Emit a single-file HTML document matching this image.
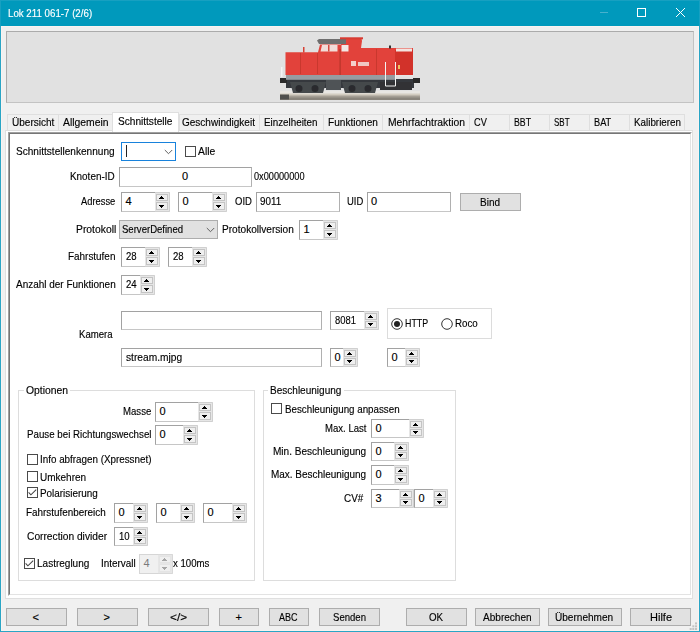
<!DOCTYPE html>
<html><head><meta charset="utf-8"><style>html,body{margin:0;padding:0;width:700px;height:632px;overflow:hidden;background:#f0f0f0;position:relative;font-family:"Liberation Sans",sans-serif;}
.t{position:absolute;white-space:nowrap;line-height:13px;color:#000;transform-origin:0 0;-webkit-text-stroke:0.15px currentColor;}
</style></head><body>
<div style="position:absolute;left:0px;top:0px;width:700px;height:26px;background:#0099bc"></div>
<div style="position:absolute;left:0px;top:26px;width:1px;height:606px;background:#2aa5c5"></div>
<div style="position:absolute;left:0px;top:0px;width:700px;height:1px;background:#17a0c1"></div>
<div style="position:absolute;left:0px;top:0px;width:1px;height:26px;background:#17a0c1"></div>
<div style="position:absolute;left:699px;top:0px;width:1px;height:26px;background:#17a0c1"></div>
<div style="position:absolute;left:699px;top:26px;width:1px;height:606px;background:#2aa5c5"></div>
<div style="position:absolute;left:0px;top:631px;width:700px;height:1px;background:#2aa5c5"></div>
<div style="position:absolute;left:600px;top:12px;width:8px;height:1px;background:#48b1cd"></div>
<div style="position:absolute;left:637px;top:8px;width:9px;height:9px;box-sizing:border-box;border:1px solid #fff"></div>
<svg style="position:absolute;left:676px;top:8px" width="9" height="9" viewBox="0 0 9 9"><path d="M0 0L9 9M9 0L0 9" stroke="#fff" stroke-width="1"/></svg>
<div style="position:absolute;left:6px;top:31px;width:688px;height:72px;box-sizing:border-box;background:#e1e1e1;border:1px solid;border-color:#ababab #c3c3c3 #c3c3c3 #ababab"></div>
<svg style="position:absolute;left:276px;top:34px" width="150" height="70" viewBox="276 34 150 70">
<defs><filter id="bl" x="-5%" y="-5%" width="110%" height="110%"><feGaussianBlur stdDeviation="0.4"/></filter></defs>
<g filter="url(#bl)">
<rect x="280" y="91" width="140" height="3" fill="#e8e6e2"/>
<rect x="280" y="94" width="140" height="6" fill="#a49e94"/>
<rect x="280" y="93.5" width="140" height="2" fill="#d2ccc0"/>
<rect x="280" y="97.5" width="140" height="2.5" fill="#8a857c"/>
<rect x="280" y="94.5" width="9" height="5" fill="#50504e"/>
<rect x="286" y="79" width="128" height="9" fill="#36393c"/>
<path d="M290 82H326L323 93H293Z" fill="#45484c"/>
<path d="M342 82H378L375 93H345Z" fill="#45484c"/>
<rect x="380" y="82" width="32" height="8" fill="#303234"/>
<rect x="326" y="80" width="15" height="10" fill="#505356"/>
<circle cx="299" cy="88.5" r="3.5" fill="#2a2c2e"/><circle cx="315" cy="88.5" r="3.5" fill="#2a2c2e"/>
<circle cx="352" cy="88.5" r="3.5" fill="#2a2c2e"/><circle cx="368" cy="88.5" r="3.5" fill="#2a2c2e"/>
<rect x="280" y="78" width="7" height="5" fill="#2a2a2a"/>
<rect x="413" y="78" width="7" height="5" fill="#2a2a2a"/>
<rect x="281" y="67" width="1.5" height="10" fill="#f4f4f4"/>
<rect x="286" y="74.8" width="110" height="5" fill="#979ca1"/>
<rect x="395" y="74.8" width="19" height="1.5" fill="#e6e6e6"/>
<path d="M285.5 52.3H318L320 44.5H341V38.5H361.5L362 41L361 48H413V74.9H285.5Z" fill="#e2433a"/>
<path d="M317 40.5L319 39H346V44H319Z" fill="#6e6e6e"/>
<rect x="340" y="37.3" width="23" height="2" fill="#d83a30"/>
<path d="M320.5 51.5L322 45H337.5V51.5Z" fill="#f2dcd8"/>
<rect x="328" y="45" width="1.5" height="6.5" fill="#d44a40"/>
<path d="M341.5 51.5V45H348.5V51.5Z" fill="#f3e8e6"/>
<rect x="395" y="50" width="18" height="25" fill="#d2322a"/>
<rect x="396" y="48.5" width="16" height="3" fill="#f3e4e0"/>
<rect x="300" y="53" width="1" height="21" fill="#c9382e"/>
<rect x="317" y="53" width="1" height="21" fill="#c9382e"/>
<rect x="339.5" y="49" width="1.2" height="26" fill="#b8352c"/>
<rect x="376" y="49" width="1" height="26" fill="#c9382e"/>
<rect x="351" y="61" width="5" height="5" fill="#f4d0cc"/>
<rect x="358" y="62" width="11" height="4" fill="#f0c8c4"/>
<rect x="303" y="47" width="1.5" height="5.5" fill="#d84034"/>
<rect x="389" y="45.5" width="2" height="3" fill="#333"/>
<rect x="398" y="65" width="2" height="4" fill="#f0c060"/>
<path d="M385.5 62V86H395.5V62" fill="none" stroke="#f2f2f2" stroke-width="1"/>
</g>
</svg>

<div style="position:absolute;left:7px;top:114px;width:52px;height:17px;box-sizing:border-box;background:#f0f0f0;border:1px solid #dfdfdf;border-bottom:none"></div>
<div style="position:absolute;left:58px;top:114px;width:55px;height:17px;box-sizing:border-box;background:#f0f0f0;border:1px solid #dfdfdf;border-bottom:none"></div>
<div style="position:absolute;left:179px;top:114px;width:81px;height:17px;box-sizing:border-box;background:#f0f0f0;border:1px solid #dfdfdf;border-bottom:none"></div>
<div style="position:absolute;left:259px;top:114px;width:65px;height:17px;box-sizing:border-box;background:#f0f0f0;border:1px solid #dfdfdf;border-bottom:none"></div>
<div style="position:absolute;left:323px;top:114px;width:60px;height:17px;box-sizing:border-box;background:#f0f0f0;border:1px solid #dfdfdf;border-bottom:none"></div>
<div style="position:absolute;left:382px;top:114px;width:88px;height:17px;box-sizing:border-box;background:#f0f0f0;border:1px solid #dfdfdf;border-bottom:none"></div>
<div style="position:absolute;left:469px;top:114px;width:41px;height:17px;box-sizing:border-box;background:#f0f0f0;border:1px solid #dfdfdf;border-bottom:none"></div>
<div style="position:absolute;left:509px;top:114px;width:41px;height:17px;box-sizing:border-box;background:#f0f0f0;border:1px solid #dfdfdf;border-bottom:none"></div>
<div style="position:absolute;left:549px;top:114px;width:41px;height:17px;box-sizing:border-box;background:#f0f0f0;border:1px solid #dfdfdf;border-bottom:none"></div>
<div style="position:absolute;left:589px;top:114px;width:41px;height:17px;box-sizing:border-box;background:#f0f0f0;border:1px solid #dfdfdf;border-bottom:none"></div>
<div style="position:absolute;left:629px;top:114px;width:56px;height:17px;box-sizing:border-box;background:#f0f0f0;border:1px solid #dfdfdf;border-bottom:none"></div>
<div style="position:absolute;left:5px;top:130px;width:688px;height:469px;box-sizing:border-box;background:#fff;border:1px solid #dfdfdf"></div>
<div style="position:absolute;left:112px;top:112px;width:67px;height:20px;box-sizing:border-box;background:#fff;border:1px solid #dfdfdf;border-bottom:none"></div>
<div style="position:absolute;left:8px;top:132px;width:684px;height:464px;box-sizing:border-box;border:1px solid;border-color:#a0a0a0 #fff #fff #a0a0a0"></div>
<div style="position:absolute;left:9px;top:133px;width:682px;height:462px;box-sizing:border-box;background:#fff;border:1px solid;border-color:#767676 #e3e3e3 #e3e3e3 #767676"></div>
<div style="position:absolute;left:121px;top:142px;width:55px;height:19px;box-sizing:border-box;background:#fff;border:1px solid #1882dc"></div>
<div style="position:absolute;left:126px;top:145px;width:1px;height:12px;background:#222"></div>
<svg style="position:absolute;left:164px;top:149px" width="9" height="6" viewBox="0 0 9 6"><path d="M0.8 1L4.5 4.7L8.2 1" fill="none" stroke="#606060" stroke-width="1"/></svg>
<svg style="position:absolute;left:185px;top:146px" width="11" height="11" viewBox="0 0 11 11"><rect x="0.5" y="0.5" width="10" height="10" fill="#fff" stroke="#4a4a4a"/></svg>
<div style="position:absolute;left:119px;top:167px;width:133px;height:20px;box-sizing:border-box;background:#fff;border:1px solid;border-color:#a2a2a2 #b0b0b0 #c6c6c6 #a2a2a2"></div>
<div style="position:absolute;left:121px;top:192px;width:49px;height:20px;box-sizing:border-box;background:#fff;border:1px solid;border-color:#a2a2a2 #b0b0b0 #c6c6c6 #a2a2a2"></div>
<svg style="position:absolute;left:155px;top:192px" width="15" height="20" viewBox="0 0 15 20"><rect x="0" y="0" width="15" height="20" fill="#e6e6e6"/><path d="M0 0.5H14.5V19.5H0" fill="none" stroke="#d0d0d0"/><rect x="1.5" y="2.5" width="11" height="6" fill="#efefef" stroke="#c4c4c4"/><rect x="1.5" y="10.5" width="11" height="7" fill="#efefef" stroke="#c4c4c4"/><path d="M6 4h1v1h1v1h1v1h-5v-1h1v-1h1z" fill="#000"/><path d="M4 13h5v1h-1v1h-1v1h-1v-1h-1v-1h-1z" fill="#000"/></svg>
<div style="position:absolute;left:178px;top:192px;width:49px;height:20px;box-sizing:border-box;background:#fff;border:1px solid;border-color:#a2a2a2 #b0b0b0 #c6c6c6 #a2a2a2"></div>
<svg style="position:absolute;left:212px;top:192px" width="15" height="20" viewBox="0 0 15 20"><rect x="0" y="0" width="15" height="20" fill="#e6e6e6"/><path d="M0 0.5H14.5V19.5H0" fill="none" stroke="#d0d0d0"/><rect x="1.5" y="2.5" width="11" height="6" fill="#efefef" stroke="#c4c4c4"/><rect x="1.5" y="10.5" width="11" height="7" fill="#efefef" stroke="#c4c4c4"/><path d="M6 4h1v1h1v1h1v1h-5v-1h1v-1h1z" fill="#000"/><path d="M4 13h5v1h-1v1h-1v1h-1v-1h-1v-1h-1z" fill="#000"/></svg>
<div style="position:absolute;left:256px;top:192px;width:84px;height:20px;box-sizing:border-box;background:#fff;border:1px solid;border-color:#a2a2a2 #b0b0b0 #c6c6c6 #a2a2a2"></div>
<div style="position:absolute;left:367px;top:192px;width:84px;height:20px;box-sizing:border-box;background:#fff;border:1px solid;border-color:#a2a2a2 #b0b0b0 #c6c6c6 #a2a2a2"></div>
<div style="position:absolute;left:460px;top:193px;width:61px;height:18px;box-sizing:border-box;background:#e1e1e1;border:1px solid #adadad"></div>
<div style="position:absolute;left:119px;top:220px;width:99px;height:19px;box-sizing:border-box;background:#e1e1e1;border:1px solid #adadad"></div>
<svg style="position:absolute;left:206px;top:227px" width="9" height="6" viewBox="0 0 9 6"><path d="M0.8 1L4.5 4.7L8.2 1" fill="none" stroke="#606060" stroke-width="1"/></svg>
<div style="position:absolute;left:299px;top:220px;width:39px;height:20px;box-sizing:border-box;background:#fff;border:1px solid;border-color:#a2a2a2 #b0b0b0 #c6c6c6 #a2a2a2"></div>
<svg style="position:absolute;left:323px;top:220px" width="15" height="20" viewBox="0 0 15 20"><rect x="0" y="0" width="15" height="20" fill="#e6e6e6"/><path d="M0 0.5H14.5V19.5H0" fill="none" stroke="#d0d0d0"/><rect x="1.5" y="2.5" width="11" height="6" fill="#efefef" stroke="#c4c4c4"/><rect x="1.5" y="10.5" width="11" height="7" fill="#efefef" stroke="#c4c4c4"/><path d="M6 4h1v1h1v1h1v1h-5v-1h1v-1h1z" fill="#000"/><path d="M4 13h5v1h-1v1h-1v1h-1v-1h-1v-1h-1z" fill="#000"/></svg>
<div style="position:absolute;left:121px;top:247px;width:39px;height:20px;box-sizing:border-box;background:#fff;border:1px solid;border-color:#a2a2a2 #b0b0b0 #c6c6c6 #a2a2a2"></div>
<svg style="position:absolute;left:145px;top:247px" width="15" height="20" viewBox="0 0 15 20"><rect x="0" y="0" width="15" height="20" fill="#e6e6e6"/><path d="M0 0.5H14.5V19.5H0" fill="none" stroke="#d0d0d0"/><rect x="1.5" y="2.5" width="11" height="6" fill="#efefef" stroke="#c4c4c4"/><rect x="1.5" y="10.5" width="11" height="7" fill="#efefef" stroke="#c4c4c4"/><path d="M6 4h1v1h1v1h1v1h-5v-1h1v-1h1z" fill="#000"/><path d="M4 13h5v1h-1v1h-1v1h-1v-1h-1v-1h-1z" fill="#000"/></svg>
<div style="position:absolute;left:168px;top:247px;width:39px;height:20px;box-sizing:border-box;background:#fff;border:1px solid;border-color:#a2a2a2 #b0b0b0 #c6c6c6 #a2a2a2"></div>
<svg style="position:absolute;left:192px;top:247px" width="15" height="20" viewBox="0 0 15 20"><rect x="0" y="0" width="15" height="20" fill="#e6e6e6"/><path d="M0 0.5H14.5V19.5H0" fill="none" stroke="#d0d0d0"/><rect x="1.5" y="2.5" width="11" height="6" fill="#efefef" stroke="#c4c4c4"/><rect x="1.5" y="10.5" width="11" height="7" fill="#efefef" stroke="#c4c4c4"/><path d="M6 4h1v1h1v1h1v1h-5v-1h1v-1h1z" fill="#000"/><path d="M4 13h5v1h-1v1h-1v1h-1v-1h-1v-1h-1z" fill="#000"/></svg>
<div style="position:absolute;left:121px;top:275px;width:34px;height:20px;box-sizing:border-box;background:#fff;border:1px solid;border-color:#a2a2a2 #b0b0b0 #c6c6c6 #a2a2a2"></div>
<svg style="position:absolute;left:140px;top:275px" width="15" height="20" viewBox="0 0 15 20"><rect x="0" y="0" width="15" height="20" fill="#e6e6e6"/><path d="M0 0.5H14.5V19.5H0" fill="none" stroke="#d0d0d0"/><rect x="1.5" y="2.5" width="11" height="6" fill="#efefef" stroke="#c4c4c4"/><rect x="1.5" y="10.5" width="11" height="7" fill="#efefef" stroke="#c4c4c4"/><path d="M6 4h1v1h1v1h1v1h-5v-1h1v-1h1z" fill="#000"/><path d="M4 13h5v1h-1v1h-1v1h-1v-1h-1v-1h-1z" fill="#000"/></svg>
<div style="position:absolute;left:121px;top:311px;width:201px;height:19px;box-sizing:border-box;background:#fff;border:1px solid;border-color:#a2a2a2 #b0b0b0 #c6c6c6 #a2a2a2"></div>
<div style="position:absolute;left:330px;top:311px;width:49px;height:19px;box-sizing:border-box;background:#fff;border:1px solid;border-color:#a2a2a2 #b0b0b0 #c6c6c6 #a2a2a2"></div>
<svg style="position:absolute;left:364px;top:311px" width="15" height="19" viewBox="0 0 15 19"><rect x="0" y="0" width="15" height="19" fill="#e6e6e6"/><path d="M0 0.5H14.5V18.5H0" fill="none" stroke="#d0d0d0"/><rect x="1.5" y="2.5" width="11" height="6" fill="#efefef" stroke="#c4c4c4"/><rect x="1.5" y="10.5" width="11" height="6" fill="#efefef" stroke="#c4c4c4"/><path d="M6 4h1v1h1v1h1v1h-5v-1h1v-1h1z" fill="#000"/><path d="M4 12h5v1h-1v1h-1v1h-1v-1h-1v-1h-1z" fill="#000"/></svg>
<div style="position:absolute;left:387px;top:308px;width:105px;height:31px;box-sizing:border-box;border:1px solid #dcdcdc"></div>
<svg style="position:absolute;left:391px;top:318px" width="12" height="12" viewBox="0 0 12 12"><circle cx="6" cy="6" r="5.3" fill="#fff" stroke="#333" stroke-width="1"/><circle cx="6" cy="6" r="3" fill="#222"/></svg>
<svg style="position:absolute;left:441px;top:318px" width="12" height="12" viewBox="0 0 12 12"><circle cx="6" cy="6" r="5.3" fill="#fff" stroke="#333" stroke-width="1"/></svg>
<div style="position:absolute;left:121px;top:348px;width:201px;height:19px;box-sizing:border-box;background:#fff;border:1px solid;border-color:#a2a2a2 #b0b0b0 #c6c6c6 #a2a2a2"></div>
<div style="position:absolute;left:330px;top:348px;width:28px;height:19px;box-sizing:border-box;background:#fff;border:1px solid;border-color:#a2a2a2 #b0b0b0 #c6c6c6 #a2a2a2"></div>
<svg style="position:absolute;left:343px;top:348px" width="15" height="19" viewBox="0 0 15 19"><rect x="0" y="0" width="15" height="19" fill="#e6e6e6"/><path d="M0 0.5H14.5V18.5H0" fill="none" stroke="#d0d0d0"/><rect x="1.5" y="2.5" width="11" height="6" fill="#efefef" stroke="#c4c4c4"/><rect x="1.5" y="10.5" width="11" height="6" fill="#efefef" stroke="#c4c4c4"/><path d="M6 4h1v1h1v1h1v1h-5v-1h1v-1h1z" fill="#000"/><path d="M4 12h5v1h-1v1h-1v1h-1v-1h-1v-1h-1z" fill="#000"/></svg>
<div style="position:absolute;left:387px;top:348px;width:33px;height:19px;box-sizing:border-box;background:#fff;border:1px solid;border-color:#a2a2a2 #b0b0b0 #c6c6c6 #a2a2a2"></div>
<svg style="position:absolute;left:405px;top:348px" width="15" height="19" viewBox="0 0 15 19"><rect x="0" y="0" width="15" height="19" fill="#e6e6e6"/><path d="M0 0.5H14.5V18.5H0" fill="none" stroke="#d0d0d0"/><rect x="1.5" y="2.5" width="11" height="6" fill="#efefef" stroke="#c4c4c4"/><rect x="1.5" y="10.5" width="11" height="6" fill="#efefef" stroke="#c4c4c4"/><path d="M6 4h1v1h1v1h1v1h-5v-1h1v-1h1z" fill="#000"/><path d="M4 12h5v1h-1v1h-1v1h-1v-1h-1v-1h-1z" fill="#000"/></svg>
<div style="position:absolute;left:18px;top:390px;width:237px;height:191px;box-sizing:border-box;border:1px solid #dddddd"></div>
<div style="position:absolute;left:24px;top:385px;width:46px;height:12px;background:#fff"></div>
<div style="position:absolute;left:155px;top:402px;width:58px;height:20px;box-sizing:border-box;background:#fff;border:1px solid;border-color:#a2a2a2 #b0b0b0 #c6c6c6 #a2a2a2"></div>
<svg style="position:absolute;left:198px;top:402px" width="15" height="20" viewBox="0 0 15 20"><rect x="0" y="0" width="15" height="20" fill="#e6e6e6"/><path d="M0 0.5H14.5V19.5H0" fill="none" stroke="#d0d0d0"/><rect x="1.5" y="2.5" width="11" height="6" fill="#efefef" stroke="#c4c4c4"/><rect x="1.5" y="10.5" width="11" height="7" fill="#efefef" stroke="#c4c4c4"/><path d="M6 4h1v1h1v1h1v1h-5v-1h1v-1h1z" fill="#000"/><path d="M4 13h5v1h-1v1h-1v1h-1v-1h-1v-1h-1z" fill="#000"/></svg>
<div style="position:absolute;left:155px;top:425px;width:43px;height:20px;box-sizing:border-box;background:#fff;border:1px solid;border-color:#a2a2a2 #b0b0b0 #c6c6c6 #a2a2a2"></div>
<svg style="position:absolute;left:183px;top:425px" width="15" height="20" viewBox="0 0 15 20"><rect x="0" y="0" width="15" height="20" fill="#e6e6e6"/><path d="M0 0.5H14.5V19.5H0" fill="none" stroke="#d0d0d0"/><rect x="1.5" y="2.5" width="11" height="6" fill="#efefef" stroke="#c4c4c4"/><rect x="1.5" y="10.5" width="11" height="7" fill="#efefef" stroke="#c4c4c4"/><path d="M6 4h1v1h1v1h1v1h-5v-1h1v-1h1z" fill="#000"/><path d="M4 13h5v1h-1v1h-1v1h-1v-1h-1v-1h-1z" fill="#000"/></svg>
<svg style="position:absolute;left:27px;top:454px" width="11" height="11" viewBox="0 0 11 11"><rect x="0.5" y="0.5" width="10" height="10" fill="#fff" stroke="#4a4a4a"/></svg>
<svg style="position:absolute;left:27px;top:471px" width="11" height="11" viewBox="0 0 11 11"><rect x="0.5" y="0.5" width="10" height="10" fill="#fff" stroke="#4a4a4a"/></svg>
<svg style="position:absolute;left:27px;top:487px" width="11" height="11" viewBox="0 0 11 11"><rect x="0.5" y="0.5" width="10" height="10" fill="#fff" stroke="#4a4a4a"/><path d="M1.6 5.3L3.9 7.8L9.2 2.6" fill="none" stroke="#444" stroke-width="1.05"/></svg>
<div style="position:absolute;left:114px;top:503px;width:34px;height:20px;box-sizing:border-box;background:#fff;border:1px solid;border-color:#a2a2a2 #b0b0b0 #c6c6c6 #a2a2a2"></div>
<svg style="position:absolute;left:133px;top:503px" width="15" height="20" viewBox="0 0 15 20"><rect x="0" y="0" width="15" height="20" fill="#e6e6e6"/><path d="M0 0.5H14.5V19.5H0" fill="none" stroke="#d0d0d0"/><rect x="1.5" y="2.5" width="11" height="6" fill="#efefef" stroke="#c4c4c4"/><rect x="1.5" y="10.5" width="11" height="7" fill="#efefef" stroke="#c4c4c4"/><path d="M6 4h1v1h1v1h1v1h-5v-1h1v-1h1z" fill="#000"/><path d="M4 13h5v1h-1v1h-1v1h-1v-1h-1v-1h-1z" fill="#000"/></svg>
<div style="position:absolute;left:156px;top:503px;width:39px;height:20px;box-sizing:border-box;background:#fff;border:1px solid;border-color:#a2a2a2 #b0b0b0 #c6c6c6 #a2a2a2"></div>
<svg style="position:absolute;left:180px;top:503px" width="15" height="20" viewBox="0 0 15 20"><rect x="0" y="0" width="15" height="20" fill="#e6e6e6"/><path d="M0 0.5H14.5V19.5H0" fill="none" stroke="#d0d0d0"/><rect x="1.5" y="2.5" width="11" height="6" fill="#efefef" stroke="#c4c4c4"/><rect x="1.5" y="10.5" width="11" height="7" fill="#efefef" stroke="#c4c4c4"/><path d="M6 4h1v1h1v1h1v1h-5v-1h1v-1h1z" fill="#000"/><path d="M4 13h5v1h-1v1h-1v1h-1v-1h-1v-1h-1z" fill="#000"/></svg>
<div style="position:absolute;left:203px;top:503px;width:44px;height:20px;box-sizing:border-box;background:#fff;border:1px solid;border-color:#a2a2a2 #b0b0b0 #c6c6c6 #a2a2a2"></div>
<svg style="position:absolute;left:232px;top:503px" width="15" height="20" viewBox="0 0 15 20"><rect x="0" y="0" width="15" height="20" fill="#e6e6e6"/><path d="M0 0.5H14.5V19.5H0" fill="none" stroke="#d0d0d0"/><rect x="1.5" y="2.5" width="11" height="6" fill="#efefef" stroke="#c4c4c4"/><rect x="1.5" y="10.5" width="11" height="7" fill="#efefef" stroke="#c4c4c4"/><path d="M6 4h1v1h1v1h1v1h-5v-1h1v-1h1z" fill="#000"/><path d="M4 13h5v1h-1v1h-1v1h-1v-1h-1v-1h-1z" fill="#000"/></svg>
<div style="position:absolute;left:114px;top:527px;width:34px;height:19px;box-sizing:border-box;background:#fff;border:1px solid;border-color:#a2a2a2 #b0b0b0 #c6c6c6 #a2a2a2"></div>
<svg style="position:absolute;left:133px;top:527px" width="15" height="19" viewBox="0 0 15 19"><rect x="0" y="0" width="15" height="19" fill="#e6e6e6"/><path d="M0 0.5H14.5V18.5H0" fill="none" stroke="#d0d0d0"/><rect x="1.5" y="2.5" width="11" height="6" fill="#efefef" stroke="#c4c4c4"/><rect x="1.5" y="10.5" width="11" height="6" fill="#efefef" stroke="#c4c4c4"/><path d="M6 4h1v1h1v1h1v1h-5v-1h1v-1h1z" fill="#000"/><path d="M4 12h5v1h-1v1h-1v1h-1v-1h-1v-1h-1z" fill="#000"/></svg>
<svg style="position:absolute;left:24px;top:558px" width="11" height="11" viewBox="0 0 11 11"><rect x="0.5" y="0.5" width="10" height="10" fill="#fff" stroke="#4a4a4a"/><path d="M1.6 5.3L3.9 7.8L9.2 2.6" fill="none" stroke="#444" stroke-width="1.05"/></svg>
<div style="position:absolute;left:139px;top:554px;width:34px;height:20px;box-sizing:border-box;background:#f0f0f0;border:1px solid;border-color:#d6d6d6"></div>
<svg style="position:absolute;left:158px;top:554px" width="15" height="20" viewBox="0 0 15 20"><rect x="0" y="0" width="15" height="20" fill="#e6e6e6"/><path d="M0 0.5H14.5V19.5H0" fill="none" stroke="#d8d8d8"/><rect x="1.5" y="2.5" width="11" height="6" fill="#efefef" stroke="#e4e4e4"/><rect x="1.5" y="10.5" width="11" height="7" fill="#efefef" stroke="#e4e4e4"/><path d="M6 4h1v1h1v1h1v1h-5v-1h1v-1h1z" fill="#a6a6a6"/><path d="M4 13h5v1h-1v1h-1v1h-1v-1h-1v-1h-1z" fill="#a6a6a6"/></svg>
<div style="position:absolute;left:263px;top:390px;width:193px;height:191px;box-sizing:border-box;border:1px solid #dddddd"></div>
<div style="position:absolute;left:268px;top:385px;width:76px;height:12px;background:#fff"></div>
<svg style="position:absolute;left:271px;top:403px" width="11" height="11" viewBox="0 0 11 11"><rect x="0.5" y="0.5" width="10" height="10" fill="#fff" stroke="#4a4a4a"/></svg>
<div style="position:absolute;left:371px;top:419px;width:53px;height:19px;box-sizing:border-box;background:#fff;border:1px solid;border-color:#a2a2a2 #b0b0b0 #c6c6c6 #a2a2a2"></div>
<svg style="position:absolute;left:409px;top:419px" width="15" height="19" viewBox="0 0 15 19"><rect x="0" y="0" width="15" height="19" fill="#e6e6e6"/><path d="M0 0.5H14.5V18.5H0" fill="none" stroke="#d0d0d0"/><rect x="1.5" y="2.5" width="11" height="6" fill="#efefef" stroke="#c4c4c4"/><rect x="1.5" y="10.5" width="11" height="6" fill="#efefef" stroke="#c4c4c4"/><path d="M6 4h1v1h1v1h1v1h-5v-1h1v-1h1z" fill="#000"/><path d="M4 12h5v1h-1v1h-1v1h-1v-1h-1v-1h-1z" fill="#000"/></svg>
<div style="position:absolute;left:371px;top:442px;width:38px;height:19px;box-sizing:border-box;background:#fff;border:1px solid;border-color:#a2a2a2 #b0b0b0 #c6c6c6 #a2a2a2"></div>
<svg style="position:absolute;left:394px;top:442px" width="15" height="19" viewBox="0 0 15 19"><rect x="0" y="0" width="15" height="19" fill="#e6e6e6"/><path d="M0 0.5H14.5V18.5H0" fill="none" stroke="#d0d0d0"/><rect x="1.5" y="2.5" width="11" height="6" fill="#efefef" stroke="#c4c4c4"/><rect x="1.5" y="10.5" width="11" height="6" fill="#efefef" stroke="#c4c4c4"/><path d="M6 4h1v1h1v1h1v1h-5v-1h1v-1h1z" fill="#000"/><path d="M4 12h5v1h-1v1h-1v1h-1v-1h-1v-1h-1z" fill="#000"/></svg>
<div style="position:absolute;left:371px;top:465px;width:38px;height:20px;box-sizing:border-box;background:#fff;border:1px solid;border-color:#a2a2a2 #b0b0b0 #c6c6c6 #a2a2a2"></div>
<svg style="position:absolute;left:394px;top:465px" width="15" height="20" viewBox="0 0 15 20"><rect x="0" y="0" width="15" height="20" fill="#e6e6e6"/><path d="M0 0.5H14.5V19.5H0" fill="none" stroke="#d0d0d0"/><rect x="1.5" y="2.5" width="11" height="6" fill="#efefef" stroke="#c4c4c4"/><rect x="1.5" y="10.5" width="11" height="7" fill="#efefef" stroke="#c4c4c4"/><path d="M6 4h1v1h1v1h1v1h-5v-1h1v-1h1z" fill="#000"/><path d="M4 13h5v1h-1v1h-1v1h-1v-1h-1v-1h-1z" fill="#000"/></svg>
<div style="position:absolute;left:371px;top:489px;width:43px;height:19px;box-sizing:border-box;background:#fff;border:1px solid;border-color:#a2a2a2 #b0b0b0 #c6c6c6 #a2a2a2"></div>
<svg style="position:absolute;left:399px;top:489px" width="15" height="19" viewBox="0 0 15 19"><rect x="0" y="0" width="15" height="19" fill="#e6e6e6"/><path d="M0 0.5H14.5V18.5H0" fill="none" stroke="#d0d0d0"/><rect x="1.5" y="2.5" width="11" height="6" fill="#efefef" stroke="#c4c4c4"/><rect x="1.5" y="10.5" width="11" height="6" fill="#efefef" stroke="#c4c4c4"/><path d="M6 4h1v1h1v1h1v1h-5v-1h1v-1h1z" fill="#000"/><path d="M4 12h5v1h-1v1h-1v1h-1v-1h-1v-1h-1z" fill="#000"/></svg>
<div style="position:absolute;left:414px;top:489px;width:34px;height:19px;box-sizing:border-box;background:#fff;border:1px solid;border-color:#a2a2a2 #b0b0b0 #c6c6c6 #a2a2a2"></div>
<svg style="position:absolute;left:433px;top:489px" width="15" height="19" viewBox="0 0 15 19"><rect x="0" y="0" width="15" height="19" fill="#e6e6e6"/><path d="M0 0.5H14.5V18.5H0" fill="none" stroke="#d0d0d0"/><rect x="1.5" y="2.5" width="11" height="6" fill="#efefef" stroke="#c4c4c4"/><rect x="1.5" y="10.5" width="11" height="6" fill="#efefef" stroke="#c4c4c4"/><path d="M6 4h1v1h1v1h1v1h-5v-1h1v-1h1z" fill="#000"/><path d="M4 12h5v1h-1v1h-1v1h-1v-1h-1v-1h-1z" fill="#000"/></svg>
<div style="position:absolute;left:6px;top:608px;width:61px;height:18px;box-sizing:border-box;background:#e1e1e1;border:1px solid #adadad"></div>
<div style="position:absolute;left:77px;top:608px;width:61px;height:18px;box-sizing:border-box;background:#e1e1e1;border:1px solid #adadad"></div>
<div style="position:absolute;left:148px;top:608px;width:61px;height:18px;box-sizing:border-box;background:#e1e1e1;border:1px solid #adadad"></div>
<div style="position:absolute;left:219px;top:608px;width:40px;height:18px;box-sizing:border-box;background:#e1e1e1;border:1px solid #adadad"></div>
<div style="position:absolute;left:269px;top:608px;width:40px;height:18px;box-sizing:border-box;background:#e1e1e1;border:1px solid #adadad"></div>
<div style="position:absolute;left:319px;top:608px;width:61px;height:18px;box-sizing:border-box;background:#e1e1e1;border:1px solid #adadad"></div>
<div style="position:absolute;left:406px;top:608px;width:61px;height:18px;box-sizing:border-box;background:#e1e1e1;border:1px solid #adadad"></div>
<div style="position:absolute;left:475px;top:608px;width:65px;height:18px;box-sizing:border-box;background:#e1e1e1;border:1px solid #adadad"></div>
<div style="position:absolute;left:548px;top:608px;width:74px;height:18px;box-sizing:border-box;background:#e1e1e1;border:1px solid #adadad"></div>
<div style="position:absolute;left:630px;top:608px;width:61px;height:18px;box-sizing:border-box;background:#e1e1e1;border:1px solid #adadad"></div>
<div style="position:absolute;left:1px;top:26px;width:698px;height:1px;background:#f9f3f1"></div>
<div style="position:absolute;left:1px;top:26px;width:1px;height:605px;background:#f9f3f1"></div>
<div style="position:absolute;left:698px;top:26px;width:1px;height:605px;background:#f9f3f1"></div>
<div style="position:absolute;left:1px;top:630px;width:698px;height:1px;background:#f9f3f1"></div>
<svg style="position:absolute;left:688px;top:621px" width="10" height="10" viewBox="0 0 10 10"><g fill="#c2c2c2"><rect x="7" y="1.4" width="2" height="2"/><rect x="7" y="4.3" width="2" height="2"/><rect x="7" y="7" width="2" height="2"/><rect x="4.3" y="4.3" width="2" height="2"/><rect x="4.3" y="7" width="2" height="2"/><rect x="1.7" y="7" width="2" height="2"/></g></svg>
<div class="t" style="left:7.50px;top:7.00px;transform:scaleX(0.8837);font-size:11px;color:#fff">Lok 211 061-7 (2/6)</div>
<div class="t" style="left:11.50px;top:116.00px;transform:scaleX(0.9127);font-size:11px;">Übersicht</div>
<div class="t" style="left:63.30px;top:116.00px;transform:scaleX(0.9427);font-size:11px;">Allgemein</div>
<div class="t" style="left:182.20px;top:116.00px;transform:scaleX(0.9103);font-size:11px;">Geschwindigkeit</div>
<div class="t" style="left:263.90px;top:116.00px;transform:scaleX(0.8925);font-size:11px;">Einzelheiten</div>
<div class="t" style="left:327.50px;top:116.00px;transform:scaleX(0.9170);font-size:11px;">Funktionen</div>
<div class="t" style="left:387.50px;top:116.00px;transform:scaleX(0.9390);font-size:11px;">Mehrfachtraktion</div>
<div class="t" style="left:474.20px;top:116.00px;transform:scaleX(0.8403);font-size:11px;">CV</div>
<div class="t" style="left:514.20px;top:116.00px;transform:scaleX(0.7988);font-size:11px;">BBT</div>
<div class="t" style="left:554.40px;top:116.00px;transform:scaleX(0.7253);font-size:11px;">SBT</div>
<div class="t" style="left:594.40px;top:116.00px;transform:scaleX(0.8377);font-size:11px;">BAT</div>
<div class="t" style="left:634.40px;top:116.00px;transform:scaleX(0.8935);font-size:11px;">Kalibrieren</div>
<div class="t" style="left:118.00px;top:115.00px;transform:scaleX(0.9175);font-size:11px;">Schnittstelle</div>
<div class="t" style="left:16.40px;top:145.20px;transform:scaleX(0.9162);font-size:11px;">Schnittstellenkennung</div>
<div class="t" style="left:197.80px;top:145.40px;transform:scaleX(0.9398);font-size:11px;">Alle</div>
<div class="t" style="left:70.40px;top:170.00px;transform:scaleX(0.9005);font-size:11px;">Knoten-ID</div>
<div class="t" style="left:182.00px;top:170.00px;transform:scaleX(1.0000);font-size:11px;">0</div>
<div class="t" style="left:253.70px;top:169.70px;transform:scaleX(0.8344);font-size:11px;">0x00000000</div>
<div class="t" style="left:81.40px;top:194.70px;transform:scaleX(0.8486);font-size:11px;">Adresse</div>
<div class="t" style="left:125.50px;top:195.00px;transform:scaleX(1.0000);font-size:11px;">4</div>
<div class="t" style="left:182.50px;top:195.00px;transform:scaleX(1.0000);font-size:11px;">0</div>
<div class="t" style="left:234.50px;top:194.70px;transform:scaleX(0.8620);font-size:11px;">OID</div>
<div class="t" style="left:260.20px;top:194.70px;transform:scaleX(0.8960);font-size:11px;">9011</div>
<div class="t" style="left:347.10px;top:194.70px;transform:scaleX(0.8578);font-size:11px;">UID</div>
<div class="t" style="left:371.00px;top:194.70px;transform:scaleX(1.0000);font-size:11px;">0</div>
<div class="t" style="left:480.40px;top:195.60px;transform:scaleX(0.9082);font-size:11px;">Bind</div>
<div class="t" style="left:75.50px;top:223.00px;transform:scaleX(0.9403);font-size:11px;">Protokoll</div>
<div class="t" style="left:121.60px;top:223.10px;transform:scaleX(0.8683);font-size:11px;">ServerDefined</div>
<div class="t" style="left:221.50px;top:223.00px;transform:scaleX(0.9176);font-size:11px;">Protokollversion</div>
<div class="t" style="left:303.50px;top:223.00px;transform:scaleX(1.0000);font-size:11px;">1</div>
<div class="t" style="left:68.10px;top:249.70px;transform:scaleX(0.9013);font-size:11px;">Fahrstufen</div>
<div class="t" style="left:125.50px;top:250.00px;transform:scaleX(0.8711);font-size:11px;">28</div>
<div class="t" style="left:172.50px;top:250.00px;transform:scaleX(0.8711);font-size:11px;">28</div>
<div class="t" style="left:15.80px;top:277.70px;transform:scaleX(0.9058);font-size:11px;">Anzahl der Funktionen</div>
<div class="t" style="left:125.50px;top:278.00px;transform:scaleX(0.8711);font-size:11px;">24</div>
<div class="t" style="left:79.10px;top:328.00px;transform:scaleX(0.8739);font-size:11px;">Kamera</div>
<div class="t" style="left:334.50px;top:314.00px;transform:scaleX(0.8559);font-size:11px;">8081</div>
<div class="t" style="left:405.20px;top:317.40px;transform:scaleX(0.8041);font-size:11px;">HTTP</div>
<div class="t" style="left:455.00px;top:317.40px;transform:scaleX(0.8871);font-size:11px;">Roco</div>
<div class="t" style="left:125.90px;top:350.50px;transform:scaleX(0.9272);font-size:11px;">stream.mjpg</div>
<div class="t" style="left:334.50px;top:351.00px;transform:scaleX(1.0000);font-size:11px;">0</div>
<div class="t" style="left:391.50px;top:351.00px;transform:scaleX(1.0000);font-size:11px;">0</div>
<div class="t" style="left:25.80px;top:383.50px;transform:scaleX(0.9437);font-size:11px;">Optionen</div>
<div class="t" style="left:122.70px;top:404.70px;transform:scaleX(0.8724);font-size:11px;">Masse</div>
<div class="t" style="left:159.50px;top:405.00px;transform:scaleX(1.0000);font-size:11px;">0</div>
<div class="t" style="left:26.50px;top:427.70px;transform:scaleX(0.8851);font-size:11px;">Pause bei Richtungswechsel</div>
<div class="t" style="left:159.50px;top:428.00px;transform:scaleX(1.0000);font-size:11px;">0</div>
<div class="t" style="left:39.90px;top:453.00px;transform:scaleX(0.8937);font-size:11px;">Info abfragen (Xpressnet)</div>
<div class="t" style="left:39.90px;top:470.50px;transform:scaleX(0.9085);font-size:11px;">Umkehren</div>
<div class="t" style="left:40.00px;top:487.00px;transform:scaleX(0.9003);font-size:11px;">Polarisierung</div>
<div class="t" style="left:26.10px;top:505.70px;transform:scaleX(0.8988);font-size:11px;">Fahrstufenbereich</div>
<div class="t" style="left:118.50px;top:506.00px;transform:scaleX(1.0000);font-size:11px;">0</div>
<div class="t" style="left:160.50px;top:506.00px;transform:scaleX(1.0000);font-size:11px;">0</div>
<div class="t" style="left:207.50px;top:506.00px;transform:scaleX(1.0000);font-size:11px;">0</div>
<div class="t" style="left:26.80px;top:529.70px;transform:scaleX(0.9284);font-size:11px;">Correction divider</div>
<div class="t" style="left:118.50px;top:530.00px;transform:scaleX(0.8711);font-size:11px;">10</div>
<div class="t" style="left:37.40px;top:557.00px;transform:scaleX(0.9097);font-size:11px;">Lastreglung</div>
<div class="t" style="left:100.50px;top:556.70px;transform:scaleX(0.9006);font-size:11px;">Intervall</div>
<div class="t" style="left:143.50px;top:557.00px;transform:scaleX(1.0000);font-size:11px;color:#7a7a7a;-webkit-text-stroke:0">4</div>
<div class="t" style="left:172.50px;top:556.70px;transform:scaleX(0.8749);font-size:11px;">x 100ms</div>
<div class="t" style="left:270.40px;top:383.50px;transform:scaleX(0.9121);font-size:11px;">Beschleunigung</div>
<div class="t" style="left:285.20px;top:402.50px;transform:scaleX(0.8880);font-size:11px;">Beschleunigung anpassen</div>
<div class="t" style="left:325.20px;top:421.70px;transform:scaleX(0.8696);font-size:11px;">Max. Last</div>
<div class="t" style="left:375.50px;top:422.00px;transform:scaleX(1.0000);font-size:11px;">0</div>
<div class="t" style="left:273.20px;top:444.70px;transform:scaleX(0.9127);font-size:11px;">Min. Beschleunigung</div>
<div class="t" style="left:375.50px;top:445.00px;transform:scaleX(1.0000);font-size:11px;">0</div>
<div class="t" style="left:271.30px;top:467.70px;transform:scaleX(0.9041);font-size:11px;">Max. Beschleunigung</div>
<div class="t" style="left:375.50px;top:468.00px;transform:scaleX(1.0000);font-size:11px;">0</div>
<div class="t" style="left:343.80px;top:491.70px;transform:scaleX(0.9017);font-size:11px;">CV#</div>
<div class="t" style="left:375.50px;top:492.00px;transform:scaleX(1.0000);font-size:11px;">3</div>
<div class="t" style="left:418.50px;top:492.00px;transform:scaleX(1.0000);font-size:11px;">0</div>
<div class="t" style="left:32.50px;top:610.70px;transform:scaleX(1.0000);font-size:11px;">&lt;</div>
<div class="t" style="left:103.50px;top:610.70px;transform:scaleX(1.0000);font-size:11px;">&gt;</div>
<div class="t" style="left:169.50px;top:610.70px;transform:scaleX(1.0734);font-size:11px;">&lt;/&gt;</div>
<div class="t" style="left:235.50px;top:610.70px;transform:scaleX(1.0000);font-size:11px;">+</div>
<div class="t" style="left:278.80px;top:610.70px;transform:scaleX(0.8185);font-size:11px;">ABC</div>
<div class="t" style="left:333.10px;top:610.70px;transform:scaleX(0.8690);font-size:11px;">Senden</div>
<div class="t" style="left:429.20px;top:610.70px;transform:scaleX(0.8855);font-size:11px;">OK</div>
<div class="t" style="left:482.70px;top:610.70px;transform:scaleX(0.9135);font-size:11px;">Abbrechen</div>
<div class="t" style="left:555.20px;top:610.70px;transform:scaleX(0.9138);font-size:11px;">Übernehmen</div>
<div class="t" style="left:649.80px;top:610.70px;transform:scaleX(0.9993);font-size:11px;">Hilfe</div>
</body></html>
